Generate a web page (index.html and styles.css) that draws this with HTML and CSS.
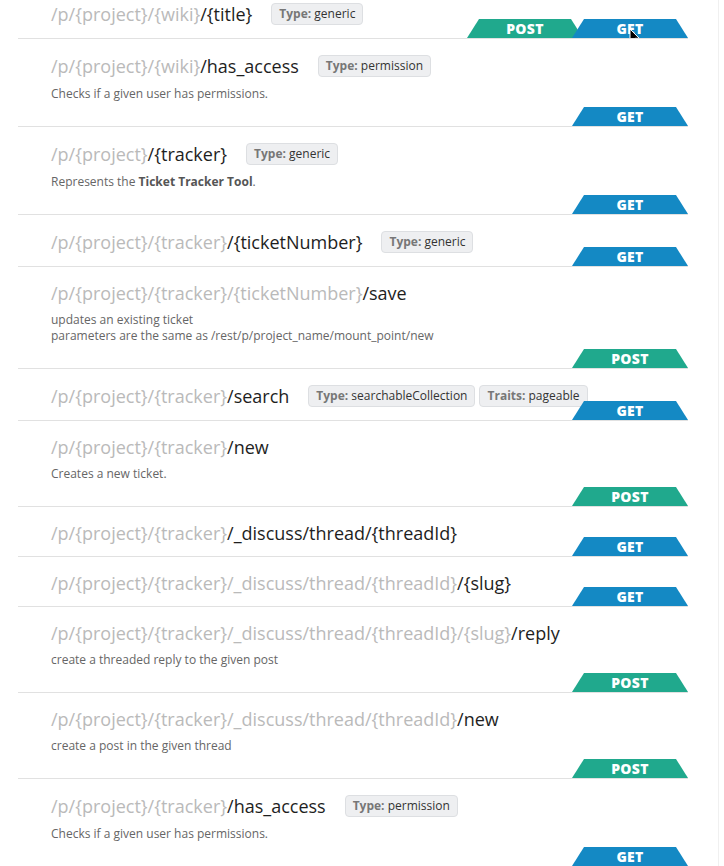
FILE: index.html
```html
<!DOCTYPE html>
<html lang="en">
<head>
<meta charset="utf-8">
<title>Resources</title>
<link rel="stylesheet" href="styles.css">
</head>
<body>
<div class="page">
  <ul class="resources">
    <li class="resource">
      <div class="head"><h3 class="path"><span class="parent">/p/{project}/{wiki}</span>/{title}</h3><span class="badge"><b>Type:</b> generic</span></div>
      <div class="methods"><span class="method post">POST</span><span class="method get">GET<svg class="cursor" width="12" height="18" viewBox="0 0 12 18"><path d="M1 1 L1 14 L4 11 L6.5 16.5 L8.5 15.5 L6 10.3 L10.2 10.3 Z" fill="#000" stroke="#fff" stroke-width="1"/></svg></span></div>
    </li>
    <li class="resource">
      <div class="head"><h3 class="path"><span class="parent">/p/{project}/{wiki}</span>/has_access</h3><span class="badge"><b>Type:</b> permission</span></div>
      <p class="desc">Checks if a given user has permissions.</p>
      <div class="methods"><span class="method get">GET</span></div>
    </li>
    <li class="resource">
      <div class="head"><h3 class="path"><span class="parent">/p/{project}</span>/{tracker}</h3><span class="badge"><b>Type:</b> generic</span></div>
      <p class="desc">Represents the <strong>Ticket Tracker Tool</strong>.</p>
      <div class="methods"><span class="method get">GET</span></div>
    </li>
    <li class="resource">
      <div class="head"><h3 class="path"><span class="parent">/p/{project}/{tracker}</span>/{ticketNumber}</h3><span class="badge"><b>Type:</b> generic</span></div>
      <div class="methods"><span class="method get">GET</span></div>
    </li>
    <li class="resource">
      <div class="head"><h3 class="path"><span class="parent">/p/{project}/{tracker}/{ticketNumber}</span>/save</h3></div>
      <p class="desc">updates an existing ticket<br>parameters are the same as /rest/p/project_name/mount_point/new</p>
      <div class="methods"><span class="method post">POST</span></div>
    </li>
    <li class="resource">
      <div class="head"><h3 class="path"><span class="parent">/p/{project}/{tracker}</span>/search</h3><span class="badge"><b>Type:</b> searchableCollection</span><span class="badge"><b>Traits:</b> pageable</span></div>
      <div class="methods"><span class="method get">GET</span></div>
    </li>
    <li class="resource">
      <div class="head"><h3 class="path"><span class="parent">/p/{project}/{tracker}</span>/new</h3></div>
      <p class="desc">Creates a new ticket.</p>
      <div class="methods"><span class="method post">POST</span></div>
    </li>
    <li class="resource">
      <div class="head"><h3 class="path"><span class="parent">/p/{project}/{tracker}</span>/_discuss/thread/{threadId}</h3></div>
      <div class="methods"><span class="method get">GET</span></div>
    </li>
    <li class="resource">
      <div class="head"><h3 class="path"><span class="parent">/p/{project}/{tracker}/_discuss/thread/{threadId}</span>/{slug}</h3></div>
      <div class="methods"><span class="method get">GET</span></div>
    </li>
    <li class="resource">
      <div class="head"><h3 class="path"><span class="parent">/p/{project}/{tracker}/_discuss/thread/{threadId}/{slug}</span>/reply</h3></div>
      <p class="desc">create a threaded reply to the given post</p>
      <div class="methods"><span class="method post">POST</span></div>
    </li>
    <li class="resource">
      <div class="head"><h3 class="path"><span class="parent">/p/{project}/{tracker}/_discuss/thread/{threadId}</span>/new</h3></div>
      <p class="desc">create a post in the given thread</p>
      <div class="methods"><span class="method post">POST</span></div>
    </li>
    <li class="resource">
      <div class="head"><h3 class="path"><span class="parent">/p/{project}/{tracker}</span>/has_access</h3><span class="badge"><b>Type:</b> permission</span></div>
      <p class="desc">Checks if a given user has permissions.</p>
      <div class="methods"><span class="method get">GET</span></div>
    </li>
  </ul>
</div>
</body>
</html>
```
FILE: styles.css
```css
html, body {
  margin: 0;
  padding: 0;
  background: #fff;
}
body {
  font-family: "Open Sans", "Liberation Sans", sans-serif;
  color: #222;
  overflow: hidden;
}
.page {
  width: 719px;
  height: 866px;
  border-right: 1px solid #f0f0f0;
  box-sizing: border-box;
  overflow: hidden;
}
.resources {
  list-style: none;
  margin: -13px 0 0 18px;
  padding: 0;
  width: 670px;
}
.resource {
  position: relative;
  padding: 15px 0 12px 33px;
  border-bottom: 1px solid #e1e1e1;
}
.head {
  display: flex;
  align-items: center;
}
.path {
  margin: 0 19px 0 0;
  font-size: 18px;
  line-height: 22px;
  font-weight: 400;
  color: #1e1e1e;
  white-space: nowrap;
}
.parent {
  color: #bababa;
}
.badge {
  display: inline-block;
  font-size: 12px;
  line-height: 20px;
  padding: 0 7px;
  margin: 1px 4px 1px 0;
  background: #eeeff1;
  border: 1px solid #dddfe2;
  border-radius: 4px;
  color: #333;
  white-space: nowrap;
}
.badge b {
  color: #777;
  font-weight: 700;
}
.desc {
  margin: 8px 0 12px;
  font-size: 12px;
  line-height: 16px;
  color: #666;
}
.desc strong {
  color: #555;
  font-weight: 700;
}
.methods {
  position: absolute;
  right: 0;
  bottom: 0;
  display: flex;
}
.method {
  position: relative;
  display: block;
  width: 116px;
  height: 19px;
  line-height: 20px;
  text-align: center;
  color: #fff;
  font-size: 14px;
  font-weight: 800;
  letter-spacing: 0.3px;
  clip-path: polygon(12px 0, calc(100% - 12px) 0, 100% 100%, 0 100%);
}
.method + .method {
  margin-left: -11px;
}
.get {
  background: #1489c4;
}
.post {
  background: #20a98d;
}
.cursor {
  position: absolute;
  left: 57px;
  top: 9px;
}
```
